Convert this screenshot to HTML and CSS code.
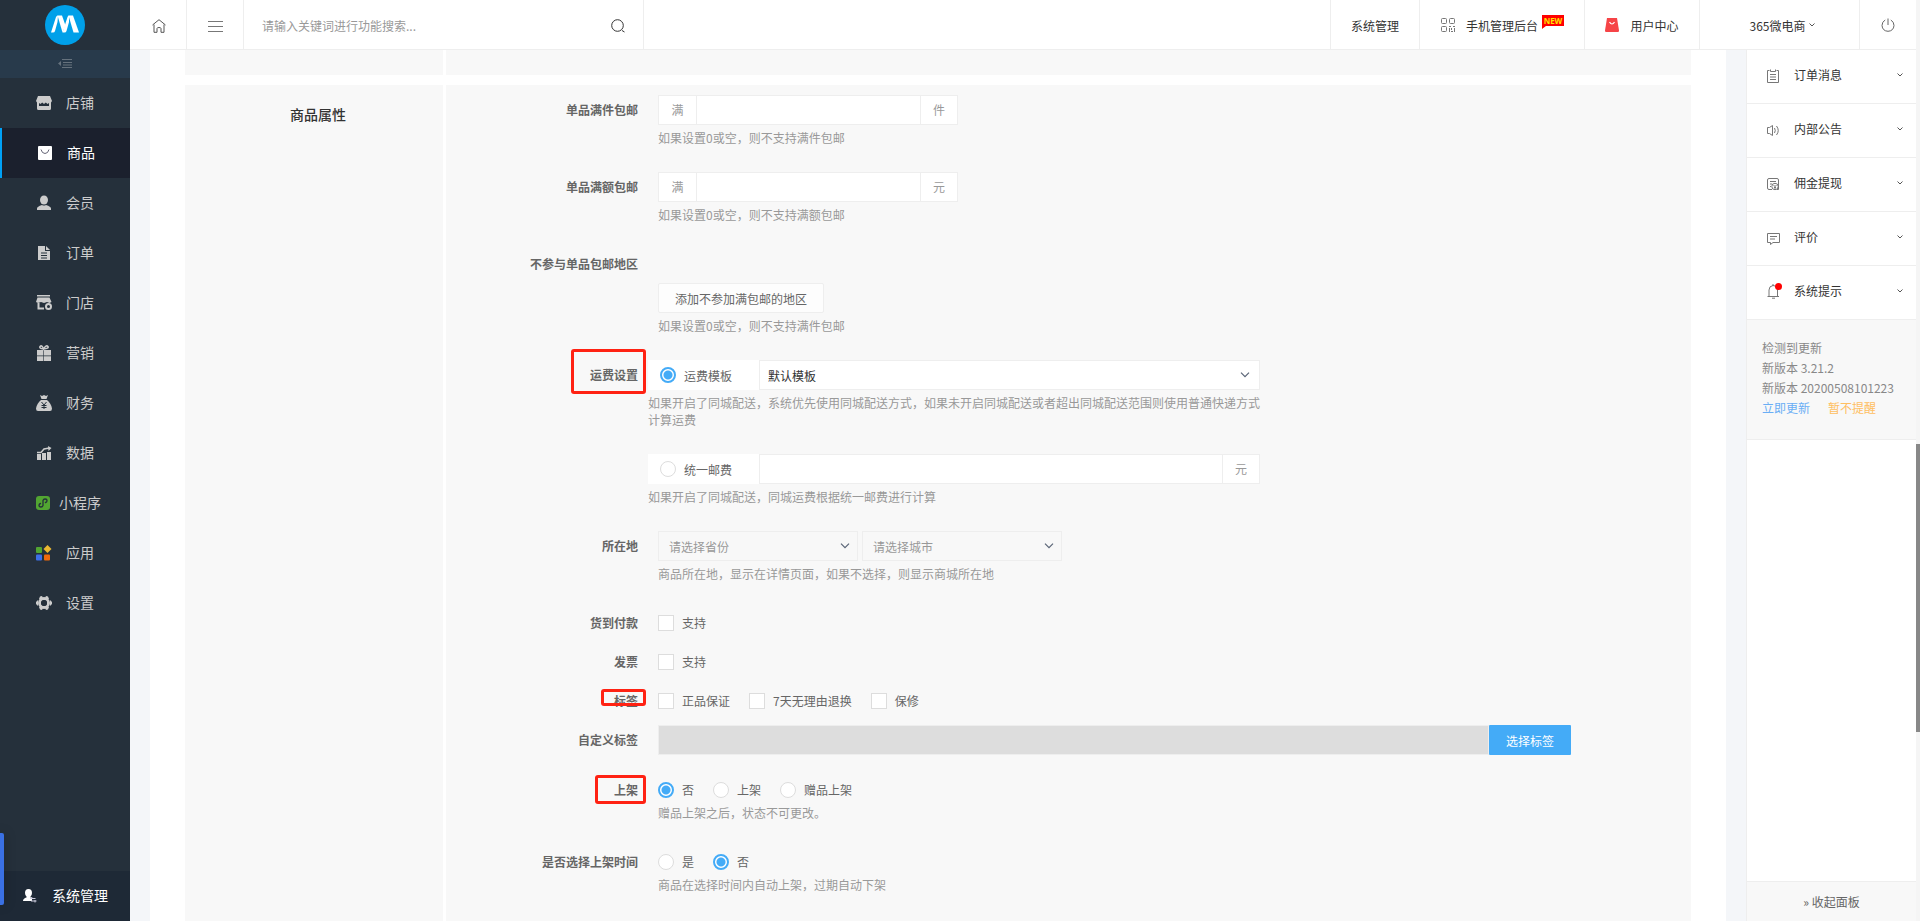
FILE: index.html
```html
<!DOCTYPE html>
<html lang="zh-CN">
<head>
    <meta charset="UTF-8">
    <meta name="viewport" content="width=device-width, initial-scale=1.0">
    <title>商品属性</title>
    <link rel="stylesheet" href="styles.css">
</head>
<body>

<aside class="sidebar">
    <a class="logo" href="#" aria-label="首页">
        <svg width="40" height="40" viewBox="0 0 40 40">
            <circle cx="20" cy="20" r="20" fill="#00a0e9"/>
            <path d="M6 27.500L11 12Q11.600 10.500 13 10.500L12.500 17L10 26Q9.600 27.500 8 27.500Z" fill="#fff"/>
            <path d="M12.500 10.500H17L20.500 20.500L17.500 27.500Z" fill="#fff"/>
            <path d="M17.500 27.500L22.500 12Q23 10.500 24 10.500L24 17L21.500 26Q21 27.500 19.500 27.500Z" fill="#fff"/>
            <path d="M23.500 10.500H28L34 27.500H28.500Z" fill="#fff"/>
        </svg>
    </a>
    <button class="collapse" type="button" aria-label="收起菜单">
        <svg width="14" height="9" viewBox="0 0 14 9"><path d="M4 .5H14M5 3.500H14M5 6H14M4 8.500H14" stroke="#66727d"/><path d="M0 4.500L3 2V7Z" fill="#66727d"/></svg>
    </button>
    <nav class="menu">
        <a href="#">
            <svg width="16" height="16" viewBox="0 0 16 16" fill="#ccc"><path d="M2 1H14L16 6L15 7.500V13.500Q15 15 13.500 15H2.500Q1 15 1 13.500V7.500L0 6ZM3 8V11H13V8L11.500 9L9.800 7.500L8 9L6.200 7.500L4.500 9Z"/></svg>
            <span>店铺</span>
        </a>
        <a href="#" class="active">
            <svg width="16" height="16" viewBox="0 0 16 16"><rect x="1" y="1" width="14" height="14" rx="1" fill="#fff"/><path d="M4 4.500Q5 8.500 8 8.500T12 4.500" fill="none" stroke="#667"/></svg>
            <span>商品</span>
        </a>
        <a href="#">
            <svg width="16" height="16" viewBox="0 0 16 16" fill="#ccc"><ellipse cx="8" cy="5" rx="4" ry="4.500"/><path d="M1 15V13.500Q1 11.500 6 10Q8 11 10 10Q15 11.500 15 13.500V15Z"/></svg>
            <span>会员</span>
        </a>
        <a href="#">
            <svg width="16" height="16" viewBox="0 0 16 16"><path d="M2 1H9V6H14V15H2Z M10 1L14 5H10Z" fill="#ccc"/><path d="M5 8H11M5 10.500H11M5 13H11" stroke="#25303b"/></svg>
            <span>订单</span>
        </a>
        <a href="#">
            <svg width="16" height="16" viewBox="0 0 16 16"><path d="M1 0H14V1.500H1ZM1.500 2.500H13.500L15.500 7L13.500 8L11 7L8 8L5 7L2 8L0 7Z" fill="#ccc"/><path d="M2.500 8V13.500H8" fill="none" stroke="#ccc" stroke-width="2"/><circle cx="12.500" cy="11.500" r="2.500" fill="none" stroke="#ccc" stroke-width="2"/></svg>
            <span>门店</span>
        </a>
        <a href="#">
            <svg width="16" height="16" viewBox="0 0 16 16"><path d="M7.500 4Q3 3.500 4 1.500Q6 -.5 7.500 4Q10 -.5 12 1.500Q13 3.500 7.500 4" fill="none" stroke="#ccc" stroke-width="1.500"/><path d="M1 5H7V10.500H1ZM7.600 5H15V10.500H7.600ZM1 11.200H7V16H1ZM7.600 11.200H15V16H7.600Z" fill="#ccc"/></svg>
            <span>营销</span>
        </a>
        <a href="#">
            <svg width="16" height="16" viewBox="0 0 16 16"><path d="M4 0L6 1L8 0L10 1L12 0L10.500 4H5.500ZM5 5H11Q15 8 16 13.500Q16 16 14 16H2Q0 16 0 13.500Q1 8 5 5Z" fill="#ccc"/><path d="M5.500 7L8 10L10.500 7M8 10V14M5.500 10.500H10.500M5.500 12.500H10.500" fill="none" stroke="#25303b"/></svg>
            <span>财务</span>
        </a>
        <a href="#">
            <svg width="16" height="16" viewBox="0 0 16 16"><path d="M1 9H5V15H1ZM6 8H10V15H6ZM11 7H15V15H11Z" fill="#ccc"/><path d="M1 7.500H5L8 4L13.500 3" fill="none" stroke="#ccc" stroke-width="1.500"/><path d="M12 1L15.500 3L12.500 6Z" fill="#ccc"/></svg>
            <span>数据</span>
        </a>
        <a href="#">
            <svg width="16" height="16" viewBox="0 0 16 16"><rect y="1" width="14" height="14" rx="3" fill="#52a532"/><path d="M7 6V10.500Q6.500 12 5 12Q3 12 3 10.200Q3.200 8.800 4.500 8.500M7 9V5.500Q7.500 4 9 4Q11 4 11 5.800Q10.800 7.200 9.500 7.500" fill="none" stroke="#25303b" stroke-width="1.300" stroke-linecap="round"/></svg>
            <span>小程序</span>
        </a>
        <a href="#">
            <svg width="16" height="16" viewBox="0 0 16 16"><rect y="2" width="6" height="6" rx="1" fill="#52a532"/><path d="M11.500 0L15.500 4L11.500 8L7.500 4Z" fill="#ecb731"/><rect y="9.500" width="6" height="6" rx="1" fill="#3d6fe8"/><rect x="8" y="9.500" width="6" height="6" rx="1" fill="#f0690a"/></svg>
            <span>应用</span>
        </a>
        <a href="#">
            <svg width="16" height="16" viewBox="0 0 16 16"><circle cx="8" cy="8" r="4.500" fill="none" stroke="#ccc" stroke-width="3"/><path d="M4 1.500L6 1L7 3H9L10 1L12 1.500L13 4H3ZM4 14.500L6 15L7 13H9L10 15L12 14.500L13 12H3ZM0 7L2 5V11L0 9ZM16 7L14 5V11L16 9Z" fill="#ccc"/><circle cx="8" cy="8" r="3" fill="#25303b"/></svg>
            <span>设置</span>
        </a>
    </nav>
    <a class="system" href="#">
        <svg width="14" height="14" viewBox="0 0 14 14"><path d="M2 4Q2 0 5.500 0T9 4Q9 6 7.500 7.500V8.500H9V12H0Q0 9.500 3.500 8.500V7.500Q2 6 2 4Z" fill="#fff"/><path d="M7 9.500H12.500M8 12H13.500M9 8L8 10M12 11V13.500" stroke="#ccd" fill="none"/></svg>
        <span>系统管理</span>
    </a>
    <div class="float-tab"></div>
</aside>

<div class="page">
    <header class="topbar">
        <a class="top-icon" href="#" aria-label="首页">
            <svg width="14" height="14" viewBox="0 0 14 14" fill="none" stroke="#555"><path d="M.5 6L7 .7L13.500 6M2 5.500V13.300H5V9.500Q5 8.500 7 8.500T9 9.500V13.300H12V5.500"/></svg>
        </a>
        <button class="top-icon" type="button" aria-label="菜单">
            <svg width="15" height="11" viewBox="0 0 15 11" stroke="#777"><path d="M0 .5H15M0 5.500H15M0 10.500H15"/></svg>
        </button>
        <form class="search">
            <input type="text" placeholder="请输入关键词进行功能搜索..." aria-label="功能搜索">
            <button type="button" aria-label="搜索">
                <svg width="14" height="14" viewBox="0 0 14 14" fill="none" stroke="#333"><circle cx="6.500" cy="6.500" r="5.800"/><path d="M11 11.500L13.500 13"/></svg>
            </button>
        </form>
        <nav class="top-links">
            <a class="link-system" href="#">系统管理</a>
            <a class="link-mobile" href="#">
                <svg width="14" height="14" viewBox="0 0 14 14" fill="none" stroke="#777"><rect x=".5" y=".5" width="5" height="5" rx="1"/><rect x="8.500" y=".5" width="5" height="5" rx="1"/><rect x=".5" y="8.500" width="5" height="5" rx="1"/><path d="M8 8.500H10M12 8.500H14M8.500 10V14M10.500 10V12M13.500 10V14M10 13.500H12"/></svg>
                <span>手机管理后台</span>
                <b class="new">NEW</b>
            </a>
            <a class="link-user" href="#">
                <svg width="14" height="14" viewBox="0 0 14 14"><path d="M2 0H12L14 12.500Q14 14 13 14H1Q0 14 0 12.500Z" fill="#f64447"/><path d="M4.500 4Q7 8 9.500 4" fill="none" stroke="#fff" stroke-width="1.200"/></svg>
                <span>用户中心</span>
            </a>
            <a class="link-shop" href="#">
                <span>365微电商</span>
                <svg width="6" height="4" viewBox="0 0 6 4" fill="none" stroke="#555"><path d="M.5 .5L3 3L5.500 .5"/></svg>
            </a>
            <a class="link-power" href="#" aria-label="退出">
                <svg width="14" height="14" viewBox="0 0 14 14" fill="none" stroke="#666"><path d="M7 .5V7M4.200 2Q1 3.800 1 7.500Q1.500 13 7 13.300Q12.500 13 13 7.500Q13 3.800 9.800 2"/></svg>
            </a>
        </nav>
    </header>

    <div class="body">
        <main class="content">
            <section class="panel panel-prev">
                <div class="panel-title"></div>
                <div class="panel-form"></div>
            </section>
            <section class="panel">
                <h2 class="panel-title">商品属性</h2>
                <form class="panel-form">
                    <div class="form-group">
                        <label class="form-label" for="edit-num">单品满件包邮</label>
                        <div class="form-control">
                            <div class="input-group">
                                <span>满</span><input type="text" id="edit-num"><span>件</span>
                            </div>
                            <p class="help">如果设置0或空，则不支持满件包邮</p>
                        </div>
                    </div>
                    <div class="form-group">
                        <label class="form-label" for="edit-money">单品满额包邮</label>
                        <div class="form-control">
                            <div class="input-group">
                                <span>满</span><input type="text" id="edit-money"><span>元</span>
                            </div>
                            <p class="help">如果设置0或空，则不支持满额包邮</p>
                        </div>
                    </div>
                    <div class="form-group">
                        <div class="form-label">不参与单品包邮地区</div>
                        <div class="form-control area">
                            <button class="btn" type="button">添加不参加满包邮的地区</button>
                            <p class="help">如果设置0或空，则不支持满件包邮</p>
                        </div>
                    </div>
                    <div class="form-group">
                        <div class="form-label">运费设置<i class="mark mark-freight"></i></div>
                        <div class="form-control freight">
                            <div class="freight-row">
                                <label class="freight-type"><input type="radio" name="freight" checked>运费模板</label>
                                <div class="select-box white">
                                    <select aria-label="运费模板"><option>默认模板</option></select>
                                    <svg width="10" height="6" viewBox="0 0 10 6"><path d="M1 .7L5 4.700L9 .7"/></svg>
                                </div>
                            </div>
                            <p class="help">如果开启了同城配送，系统优先使用同城配送方式，如果未开启同城配送或者超出同城配送范围则使用普通快递方式计算运费</p>
                        </div>
                    </div>
                    <div class="form-group">
                        <div class="form-label"></div>
                        <div class="form-control freight">
                            <div class="freight-row">
                                <label class="freight-type"><input type="radio" name="freight">统一邮费</label>
                                <div class="input-group">
                                    <input type="text" aria-label="统一邮费"><span>元</span>
                                </div>
                            </div>
                            <p class="help">如果开启了同城配送，同城运费根据统一邮费进行计算</p>
                        </div>
                    </div>
                    <div class="form-group">
                        <label class="form-label" for="province">所在地</label>
                        <div class="form-control">
                            <div class="city-row">
                                <div class="select-box">
                                    <select id="province"><option>请选择省份</option></select>
                                    <svg width="10" height="6" viewBox="0 0 10 6"><path d="M1 .7L5 4.700L9 .7"/></svg>
                                </div>
                                <div class="select-box">
                                    <select aria-label="城市"><option>请选择城市</option></select>
                                    <svg width="10" height="6" viewBox="0 0 10 6"><path d="M1 .7L5 4.700L9 .7"/></svg>
                                </div>
                            </div>
                            <p class="help">商品所在地，显示在详情页面，如果不选择，则显示商城所在地</p>
                        </div>
                    </div>
                    <div class="form-group compact">
                        <div class="form-label">货到付款</div>
                        <div class="form-control checks">
                            <label><input type="checkbox">支持</label>
                        </div>
                    </div>
                    <div class="form-group compact">
                        <div class="form-label">发票</div>
                        <div class="form-control checks">
                            <label><input type="checkbox">支持</label>
                        </div>
                    </div>
                    <div class="form-group compact">
                        <div class="form-label">标签<i class="mark mark-tag"></i></div>
                        <div class="form-control checks">
                            <label><input type="checkbox">正品保证</label>
                            <label><input type="checkbox">7天无理由退换</label>
                            <label><input type="checkbox">保修</label>
                        </div>
                    </div>
                    <div class="form-group custom">
                        <label class="form-label" for="custom-tag">自定义标签</label>
                        <div class="form-control tag-row">
                            <input type="text" id="custom-tag" readonly>
                            <button class="btn-primary" type="button">选择标签</button>
                        </div>
                    </div>
                    <div class="form-group">
                        <div class="form-label">上架<i class="mark mark-sale"></i></div>
                        <div class="form-control">
                            <div class="checks">
                                <label><input type="radio" name="status" checked>否</label>
                                <label><input type="radio" name="status">上架</label>
                                <label><input type="radio" name="status">赠品上架</label>
                            </div>
                            <p class="help">赠品上架之后，状态不可更改。</p>
                        </div>
                    </div>
                    <div class="form-group">
                        <div class="form-label">是否选择上架时间</div>
                        <div class="form-control">
                            <div class="checks">
                                <label><input type="radio" name="timing">是</label>
                                <label><input type="radio" name="timing" checked>否</label>
                            </div>
                            <p class="help">商品在选择时间内自动上架，过期自动下架</p>
                        </div>
                    </div>
                </form>
            </section>
        </main>

        <aside class="notice">
            <a class="notice-item" href="#">
                <svg class="icon" width="16" height="16" viewBox="0 -2 16 16"><path d="M3.500 1.500H1.500V13.500H12.500V1.500H10.500M4.500 .5V2.500H9.500V.5M4 5.500H10M4 8H10M4 10.500H10"/></svg>
                <span>订单消息</span>
                <svg class="caret" width="6" height="4" viewBox="0 0 6 4"><path d="M.5 .5L3 3L5.500 .5"/></svg>
            </a>
            <a class="notice-item" href="#">
                <svg class="icon" width="16" height="16" viewBox="0 -2 16 16"><path d="M6.500 2.500L3.500 4.500H1.500V10.500H3.500L6.500 12.500ZM8.500 5Q10 7.500 8.500 10M10.500 3Q14 7.500 10.500 12"/></svg>
                <span>内部公告</span>
                <svg class="caret" width="6" height="4" viewBox="0 0 6 4"><path d="M.5 .5L3 3L5.500 .5"/></svg>
            </a>
            <a class="notice-item" href="#">
                <svg class="icon" width="16" height="16" viewBox="0 -2 16 16"><path d="M6 12.500H3Q1.500 12.500 1.500 11V3Q1.500 1.500 3 1.500H11Q12.500 1.500 12.500 3V12.500H11M4 4.500H10M4 7H6M4 9.500H5M7.500 8L9 9.500L10.500 8M9 9.500V12M8 10.500H10"/><circle cx="9" cy="9.500" r="3.200"/></svg>
                <span>佣金提现</span>
                <svg class="caret" width="6" height="4" viewBox="0 0 6 4"><path d="M.5 .5L3 3L5.500 .5"/></svg>
            </a>
            <a class="notice-item" href="#">
                <svg class="icon" width="16" height="16" viewBox="0 -2 16 16"><path d="M1.500 2.500H13.500V11.500H7L4.500 13.500V11.500H1.500ZM4 5.500H11M4 8H9"/></svg>
                <span>评价</span>
                <svg class="caret" width="6" height="4" viewBox="0 0 6 4"><path d="M.5 .5L3 3L5.500 .5"/></svg>
            </a>
            <a class="notice-item" href="#">
                <svg class="icon" width="16" height="16" viewBox="0 0 16 16"><path d="M1.500 13.500H13M3 13V7Q3 3 7 2.500Q11.500 3 11.500 7V13M6 15.200H9M7 1V3"/><circle cx="12.500" cy="3.500" r="3.500" class="dot"/></svg>
                <span>系统提示</span>
                <svg class="caret" width="6" height="4" viewBox="0 0 6 4"><path d="M.5 .5L3 3L5.500 .5"/></svg>
            </a>
            <div class="update">
                <p>检测到更新</p>
                <p>新版本 3.21.2</p>
                <p>新版本 20200508101223</p>
                <p><a class="now" href="#">立即更新</a><a class="later" href="#">暂不提醒</a></p>
            </div>
            <button class="fold" type="button">» 收起面板</button>
        </aside>
    </div>
</div>

<div class="scrollbar"><div class="thumb"></div></div>

</body>
</html>
```
FILE: styles.css
```css
/* Global styles */
* {
    box-sizing: border-box;
}
body {
    display: flex;
    height: 100vh;
    margin: 0;
    overflow: hidden;
    background-color: #f4f6f9;
    color: #666;
    font-family: "Noto Sans CJK SC", sans-serif;
    font-size: 12px;
}
a {
    color: inherit;
    text-decoration: none;
}
h2, p {
    margin: 0;
}
button, input, select {
    font-family: inherit;
    font-size: 12px;
    color: inherit;
    margin: 0;
    padding: 0;
    border: 0;
    border-radius: 0;
    background: none;
}
svg {
    display: block;
    flex: none;
}

/* Sidebar */
.sidebar {
    position: relative;
    display: flex;
    flex-direction: column;
    flex: none;
    width: 130px;
    background-color: #25303b;
    color: #ccc;
    font-size: 14px;
}
.logo, .collapse {
    display: flex;
    align-items: center;
    justify-content: center;
    height: 50px;
}
.collapse {
    height: 28px;
    padding-bottom: 2px;
    background-color: #283a4b;
}
.menu {
    flex: 1;
}
.menu a {
    display: flex;
    align-items: center;
    gap: 7px;
    height: 50px;
    padding-left: 36px;
}
.menu span {
    width: 42px;
    padding-bottom: 2px;
    text-align: center;
}
.menu .active {
    border-left: 2px solid #00a0f5;
    padding-left: 35px;
    background-color: #1b202d;
    color: #fff;
}
.system {
    display: flex;
    align-items: center;
    gap: 15px;
    height: 50px;
    padding-left: 23px;
    background-color: #1e2936;
    color: #fff;
}
.system span {
    padding-bottom: 2px;
}
.float-tab {
    position: absolute;
    left: 0;
    bottom: 16px;
    width: 4px;
    height: 72px;
    border-radius: 0 2px 2px 0;
    background-color: #3a70e3;
    box-shadow: 0 0 12px rgba(0, 0, 0, 0.3);
}

/* Top bar */
.page {
    display: flex;
    flex-direction: column;
    flex: 1;
    min-width: 0;
}
.topbar {
    display: flex;
    flex: none;
    height: 50px;
    border-bottom: 1px solid #eee;
    background-color: #fff;
    color: #333;
}
.top-icon {
    display: flex;
    align-items: center;
    justify-content: center;
    width: 57px;
    padding: 3px 0 0 1px;
    border-right: 1px solid #eee;
}
.search {
    display: flex;
    width: 400px;
    padding-right: 18px;
    border-right: 1px solid #eee;
}
.search input {
    flex: 1;
    padding: 1px 0 0 18px;
    outline: none;
}
.search input::placeholder {
    color: #999;
}
.search button {
    padding-top: 3px;
}
.top-links {
    display: flex;
    margin-left: auto;
}
.top-links a {
    display: flex;
    align-items: center;
    justify-content: center;
    gap: 11px;
    padding-top: 1px;
    border-left: 1px solid #eee;
}
.top-links .link-system {
    width: 89px;
}
.top-links .link-mobile {
    position: relative;
    width: 165px;
    justify-content: flex-start;
    padding-left: 21px;
}
.top-links .link-user {
    width: 115px;
}
.top-links .link-shop {
    width: 160px;
    gap: 4px;
    padding-left: 6px;
}
.top-links .link-power {
    width: 57px;
}
.new {
    position: absolute;
    top: 15px;
    right: 20px;
    width: 22px;
    height: 14px;
    background-color: #f00;
    clip-path: polygon(0 0, 100% 0, 100% 79%, 18% 79%, 0 100%);
    color: #ffe200;
    font-family: "Noto Sans", sans-serif;
    font-size: 8px;
    line-height: 11px;
    text-align: center;
}

/* Content */
.body {
    display: flex;
    flex: 1;
    min-height: 0;
}
.content {
    flex: 1;
    min-width: 0;
    margin: 0 20px;
    padding: 0 35px;
    overflow: hidden;
    background-color: #fff;
}
.panel {
    display: flex;
    gap: 3px;
    min-height: 100%;
}
.panel-prev {
    min-height: 25px;
    margin-bottom: 10px;
}
.panel-title {
    flex: none;
    width: 258px;
    padding: 19px 0 0 8px;
    background-color: #f8f8f8;
    color: #333;
    font-size: 14px;
    font-weight: 500;
    line-height: 20px;
    text-align: center;
}
.panel-form {
    flex: 1;
    padding: 10px 120px 0 0;
    background-color: #f8f8f8;
}
.panel-prev .panel-title, .panel-prev .panel-form {
    padding: 0;
}

/* Form */
.form-group {
    display: flex;
    gap: 20px;
    align-items: flex-start;
    margin-bottom: 26px;
}
.form-group.compact {
    margin-bottom: 9px;
}
.form-group.custom {
    margin-bottom: 20px;
}
.form-label {
    position: relative;
    flex: none;
    width: 192px;
    height: 30px;
    font-weight: 700;
    line-height: 30px;
    text-align: right;
}
.form-control {
    flex: 1;
    min-width: 0;
}
.help {
    margin-top: 4px;
    color: #999;
    line-height: 17px;
}
.input-group {
    display: flex;
    width: 300px;
    height: 30px;
    border: 1px solid #eee;
    background-color: #fff;
}
.input-group input {
    flex: 1;
    min-width: 0;
    padding: 0 10px;
    outline: none;
}
.input-group span {
    width: 37px;
    color: #999;
    line-height: 28px;
    text-align: center;
}
.input-group span + input {
    border-left: 1px solid #eee;
}
.input-group input + span {
    border-left: 1px solid #eee;
}
.area {
    padding-top: 34px;
}
.btn {
    display: block;
    height: 30px;
    padding: 0 16px;
    border: 1px solid #eee;
    border-radius: 2px;
    background-color: #fdfdfd;
}

/* Freight rows */
.freight {
    max-width: 612px;
    margin-left: -10px;
}
.freight-row {
    display: flex;
}
.freight-type {
    display: flex;
    align-items: center;
    gap: 8px;
    flex: none;
    width: 111px;
    padding-left: 12px;
    background-color: #fff;
}
.freight-row .select-box, .freight-row .input-group {
    flex: 1;
}
.select-box {
    position: relative;
    width: 200px;
    height: 30px;
}
.select-box select {
    width: 100%;
    height: 30px;
    padding: 0 30px 0 10px;
    border: 1px solid #eee;
    color: #999;
    appearance: none;
}
.select-box svg {
    position: absolute;
    top: 12px;
    right: 8px;
    fill: none;
    stroke: #5a6577;
    stroke-width: 1.2;
    pointer-events: none;
}
.select-box.white select {
    padding-left: 8px;
    background-color: #fff;
    color: #333;
}
.select-box.white svg {
    right: 10px;
}
.city-row {
    display: flex;
    gap: 4px;
}

/* Radios and checkboxes */
input[type="radio"], input[type="checkbox"] {
    flex: none;
    width: 16px;
    height: 16px;
    border: 1px solid #ddd;
    background-color: #fff;
    appearance: none;
}
input[type="radio"] {
    border-radius: 50%;
}
input[type="radio"]:checked {
    border: 2px solid #44abf7;
    background: radial-gradient(circle, #44abf7 4px, #fff 5px);
}
.checks {
    display: flex;
    gap: 19px;
    height: 29px;
}
.checks label {
    display: flex;
    align-items: center;
    gap: 8px;
}
.checks + .help {
    margin-top: 0;
}
.tag-row {
    display: flex;
}
.tag-row input {
    flex: 1;
    height: 30px;
    border: 1px solid #eee;
    background-color: #ddd;
}
.btn-primary {
    width: 82px;
    height: 30px;
    border-radius: 1px;
    background-color: #44abf7;
    color: #fff;
}

/* Red frames over the labels */
.mark {
    position: absolute;
    right: -8px;
    border: 3px solid #ff2213;
    border-radius: 3px;
}
.mark-freight {
    top: -11px;
    width: 75px;
    height: 45px;
}
.mark-tag {
    top: 3px;
    width: 45px;
    height: 17px;
}
.mark-sale {
    top: 0;
    width: 51px;
    height: 29px;
}

/* Notice panel */
.notice {
    display: flex;
    flex-direction: column;
    flex: none;
    width: 170px;
    border-left: 1px solid #eee;
    background-color: #fff;
}
.notice-item {
    display: flex;
    align-items: center;
    height: 54px;
    padding: 0 13px 4px 19px;
    border-bottom: 1px solid #eee;
    color: #333;
}
.notice-item span {
    flex: 1;
}
.icon {
    margin-right: 12px;
    fill: none;
    stroke: #777;
}
.icon .dot {
    fill: #f00;
    stroke: none;
}
.caret {
    fill: none;
    stroke: #555;
}
.update {
    padding: 18px 0 21px 15px;
    border-bottom: 1px solid #eee;
    background-color: #f8f8f8;
    color: #888;
    line-height: 20px;
}
.update .now {
    margin-right: 18px;
    color: #6aaef5;
}
.update .later {
    color: #ffbe61;
}
.fold {
    height: 40px;
    margin-top: auto;
    border-top: 1px solid #eee;
    background-color: #f8f8f8;
}

/* Page scrollbar */
.scrollbar {
    flex: none;
    width: 4px;
    background-color: #f5f5f5;
}
.thumb {
    height: 288px;
    margin-top: 444px;
    background-color: #888;
}
```
